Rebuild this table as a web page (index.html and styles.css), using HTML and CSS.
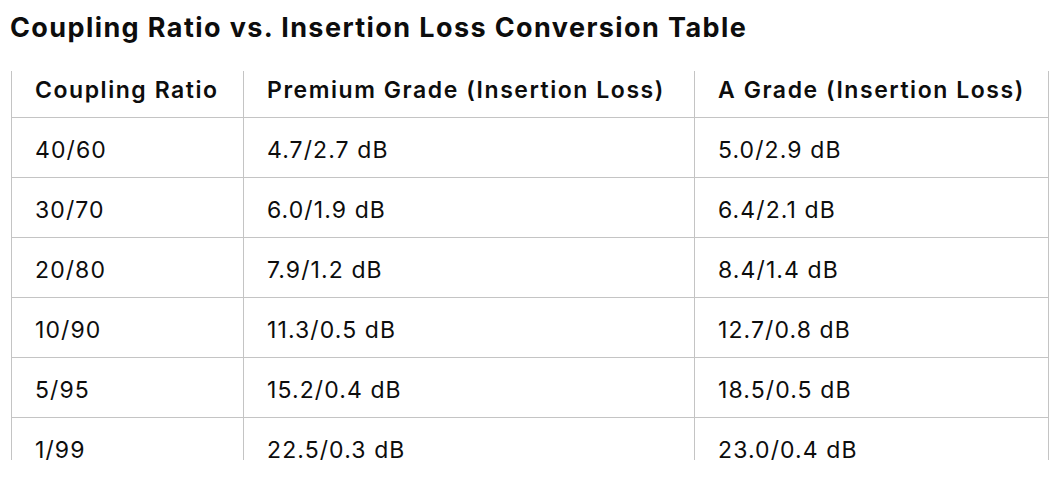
FILE: index.html
```html
<!DOCTYPE html>
<html>
<head>
<meta charset="utf-8">
<link rel="stylesheet" href="styles.css">
</head>
<body>
<h2 class="title">Coupling Ratio vs. Insertion Loss Conversion Table</h2>
<div class="table-wrap">
<table class="grid">
<colgroup><col class="c1"><col class="c2"><col class="c3"></colgroup>
<thead>
<tr><th>Coupling Ratio</th><th>Premium Grade (Insertion Loss)</th><th class="last">A Grade (Insertion Loss)</th></tr>
</thead>
<tbody>
<tr><td>40/60</td><td>4.7/2.7 dB</td><td class="last">5.0/2.9 dB</td></tr>
<tr><td>30/70</td><td>6.0/1.9 dB</td><td class="last">6.4/2.1 dB</td></tr>
<tr><td>20/80</td><td>7.9/1.2 dB</td><td class="last">8.4/1.4 dB</td></tr>
<tr><td>10/90</td><td>11.3/0.5 dB</td><td class="last">12.7/0.8 dB</td></tr>
<tr><td>5/95</td><td>15.2/0.4 dB</td><td class="last">18.5/0.5 dB</td></tr>
<tr><td>1/99</td><td>22.5/0.3 dB</td><td class="last">23.0/0.4 dB</td></tr>
</tbody>
</table>
</div>
</body>
</html>
```
FILE: styles.css
```css
html, body {
  margin: 0;
  padding: 0;
  background: #ffffff;
  color: #0d0d0d;
  font-family: Inter, "Noto Sans", "Liberation Sans", sans-serif;
}
.title {
  margin: 0;
  padding: 12px 0 0 10px;
  font-size: 27px;
  line-height: 32px;
  font-weight: 700;
  letter-spacing: 1.4px;
  white-space: nowrap;
}
.table-wrap {
  margin: 27px 0 0 11px;
  height: 389px;
  overflow: hidden;
}
.grid {
  border-collapse: separate;
  border-spacing: 0;
  table-layout: fixed;
  width: 1038px;
  font-size: 23px;
  line-height: 26px;
}
.c1 { width: 232px; }
.c2 { width: 451px; }
.c3 { width: 355px; }
.grid th, .grid td {
  box-sizing: border-box;
  text-align: left;
  vertical-align: top;
  border-left: 1px solid #c4c4c4;
  border-bottom: 1px solid #c4c4c4;
  padding-left: 23px;
  white-space: nowrap;
}
.grid th {
  font-weight: 600;
  height: 47px;
  padding-top: 6px;
  letter-spacing: 1.55px;
}
.grid td {
  font-weight: 400;
  height: 60px;
  padding-top: 19px;
  letter-spacing: 1.1px;
}
.grid .last {
  border-right: 1px solid #c4c4c4;
}
```
